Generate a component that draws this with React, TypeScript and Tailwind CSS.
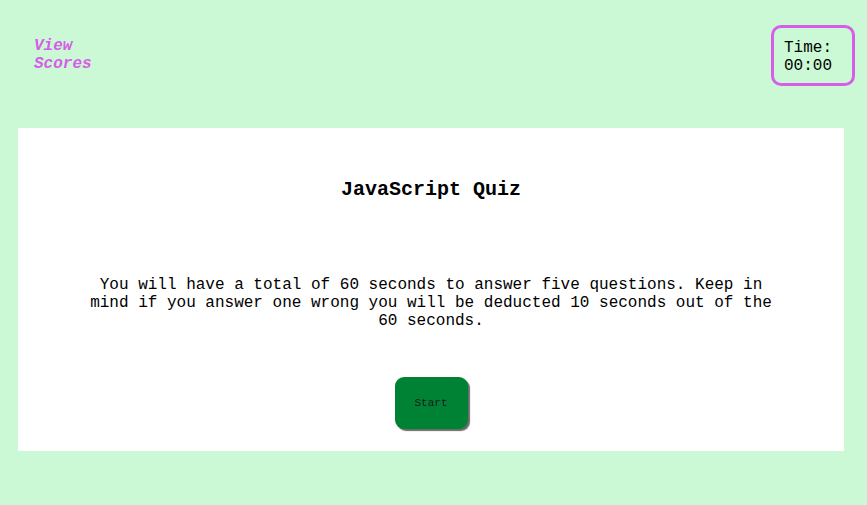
export default function App() {
    return (
        <div className="min-h-screen bg-[#ccf9d5] font-['Liberation_Mono',monospace] text-black">
            {/* Header */}
            <div className="flex items-start justify-between h-[128px] pl-[34px] pr-[12px] pt-[25px]">
                <a className="mt-[12px] w-[70px] text-[16px] leading-[18px] font-bold italic text-[#d65ee8] cursor-pointer">
                    View Scores
                </a>
                <div className="w-[84px] h-[61px] border-[3px] border-[#d65ee8] rounded-[10px] px-[10px] pt-[11px] text-[16px] leading-[18px]">
                    Time:
                    <br />
                    00:00
                </div>
            </div>

            {/* Quiz card */}
            <div className="ml-[18px] w-[826px] h-[323px] bg-white flex flex-col items-center pt-[50px]">
                <h1 className="text-[20px] leading-[23px] font-bold">
                    JavaScript Quiz
                </h1>
                <p className="mt-[75px] w-[690px] text-center text-[16px] leading-[18px]">
                    You will have a total of 60 seconds to answer five questions. Keep in mind if you answer one wrong you will be deducted 10 seconds out of the 60 seconds.
                </p>
                <button className="mt-[47px] w-[73px] h-[52px] rounded-[9px] bg-[#008234] text-[11px] text-[#1a1a1a] shadow-[2px_2px_1px_0px_#6b6b6b]">
                    Start
                </button>
            </div>
        </div>
    )
}
